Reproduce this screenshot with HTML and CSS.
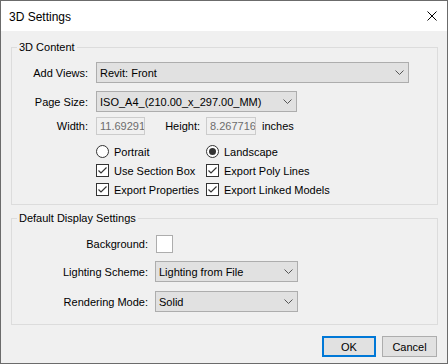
FILE: index.html
```html
<!DOCTYPE html>
<html lang="en">
<head>
    <meta charset="UTF-8">
    <title>3D Settings</title>
    <link rel="stylesheet" href="styles.css">
</head>
<body>
    <div class="window">
        <div class="titlebar">
            <span class="title">3D Settings</span>
            <svg class="close" width="10" height="10" viewBox="0 0 10 10">
                <path d="M0.5 0.5 L9.5 9.5 M9.5 0.5 L0.5 9.5" stroke="#000" stroke-width="1" fill="none"/>
            </svg>
        </div>
        <div class="dialog">
            <fieldset class="group content-group">
                <legend>3D Content</legend>
                <div class="row first">
                    <label class="lbl">Add Views:</label>
                    <div class="select views">
                        <span>Revit: Front</span>
                        <svg width="9" height="5" viewBox="0 0 9 5"><path d="M0.5 0.5 L4.5 4.5 L8.5 0.5" fill="none" stroke="#555"/></svg>
                    </div>
                </div>
                <div class="row gap8">
                    <label class="lbl">Page Size:</label>
                    <div class="select page">
                        <span>ISO_A4_(210.00_x_297.00_MM)</span>
                        <svg width="9" height="5" viewBox="0 0 9 5"><path d="M0.5 0.5 L4.5 4.5 L8.5 0.5" fill="none" stroke="#555"/></svg>
                    </div>
                </div>
                <div class="row gap5">
                    <label class="lbl">Width:</label>
                    <span class="field w1">11.69291</span>
                    <label class="lbl-height">Height:</label>
                    <span class="field w2">8.267716</span>
                    <span class="unit">inches</span>
                </div>
                <div class="options">
                    <div class="opt">
                        <svg width="13" height="13" viewBox="0 0 13 13"><circle cx="6.5" cy="6.5" r="6" fill="#fff" stroke="#333"/></svg>
                        <span>Portrait</span>
                    </div>
                    <div class="opt">
                        <svg width="13" height="13" viewBox="0 0 13 13"><circle cx="6.5" cy="6.5" r="6" fill="#fff" stroke="#333"/><circle cx="6.5" cy="6.5" r="3.5" fill="#333"/></svg>
                        <span>Landscape</span>
                    </div>
                    <div class="opt">
                        <svg width="13" height="13" viewBox="0 0 13 13"><rect x="0.5" y="0.5" width="12" height="12" fill="#fff" stroke="#333"/><path d="M2.5 6.5 L5 9 L10.5 3.5" fill="none" stroke="#333" stroke-width="1.2"/></svg>
                        <span>Use Section Box</span>
                    </div>
                    <div class="opt">
                        <svg width="13" height="13" viewBox="0 0 13 13"><rect x="0.5" y="0.5" width="12" height="12" fill="#fff" stroke="#333"/><path d="M2.5 6.5 L5 9 L10.5 3.5" fill="none" stroke="#333" stroke-width="1.2"/></svg>
                        <span>Export Poly Lines</span>
                    </div>
                    <div class="opt">
                        <svg width="13" height="13" viewBox="0 0 13 13"><rect x="0.5" y="0.5" width="12" height="12" fill="#fff" stroke="#333"/><path d="M2.5 6.5 L5 9 L10.5 3.5" fill="none" stroke="#333" stroke-width="1.2"/></svg>
                        <span>Export Properties</span>
                    </div>
                    <div class="opt">
                        <svg width="13" height="13" viewBox="0 0 13 13"><rect x="0.5" y="0.5" width="12" height="12" fill="#fff" stroke="#333"/><path d="M2.5 6.5 L5 9 L10.5 3.5" fill="none" stroke="#333" stroke-width="1.2"/></svg>
                        <span>Export Linked Models</span>
                    </div>
                </div>
            </fieldset>

            <fieldset class="group display-group">
                <legend>Default Display Settings</legend>
                <div class="row first-display">
                    <label class="lbl wide">Background:</label>
                    <span class="swatch"></span>
                </div>
                <div class="row gap8">
                    <label class="lbl wide">Lighting Scheme:</label>
                    <div class="select short">
                        <span>Lighting from File</span>
                        <svg width="9" height="5" viewBox="0 0 9 5"><path d="M0.5 0.5 L4.5 4.5 L8.5 0.5" fill="none" stroke="#555"/></svg>
                    </div>
                </div>
                <div class="row gap9">
                    <label class="lbl wide">Rendering Mode:</label>
                    <div class="select short">
                        <span>Solid</span>
                        <svg width="9" height="5" viewBox="0 0 9 5"><path d="M0.5 0.5 L4.5 4.5 L8.5 0.5" fill="none" stroke="#555"/></svg>
                    </div>
                </div>
            </fieldset>

            <div class="buttons">
                <button class="btn default">OK</button>
                <button class="btn">Cancel</button>
            </div>
        </div>
    </div>
</body>
</html>
```

FILE: styles.css
```css
body {
    margin: 0;
    padding: 0;
    background-color: #f0f0f0;
    font-family: "Liberation Sans", Arial, sans-serif;
    font-size: 11px;
    color: #000;
}
.window {
    width: 448px;
    height: 364px;
    box-sizing: border-box;
    border: 1px solid #6b6b6b;
    display: flex;
    flex-direction: column;
    background-color: #f0f0f0;
}
.titlebar {
    height: 30px;
    background-color: #fff;
    display: flex;
    align-items: center;
    justify-content: space-between;
    padding: 0 10px 0 8px;
}
.title {
    font-size: 12px;
    margin-top: 1px;
}
.close {
    display: block;
}
.dialog {
    flex: 1;
    display: flex;
    flex-direction: column;
}
.group {
    margin: 0 9px 0 10px;
    padding: 0;
    border: 1px solid #dcdcdc;
    min-width: 0;
}
.group legend {
    margin-left: 5px;
    padding: 0 2px;
    line-height: 13px;
}
.content-group {
    margin-top: 10px;
    padding-bottom: 5px;
}
.display-group {
    margin-top: 7px;
    padding-bottom: 12px;
}
.row {
    display: flex;
    align-items: center;
}
.row.first {
    margin-top: 8px;
}
.row.first-display {
    margin-top: 10px;
}
.row.gap8 {
    margin-top: 8px;
}
.row.gap9 {
    margin-top: 9px;
}
.row.gap5 {
    margin-top: 5px;
}
.lbl {
    width: 76px;
    margin-right: 8px;
    text-align: right;
    white-space: nowrap;
}
.lbl.wide {
    width: 136px;
    margin-right: 7px;
}
.select {
    height: 21px;
    box-sizing: border-box;
    background-color: #e1e1e1;
    border: 1px solid #adadad;
    display: flex;
    align-items: center;
    justify-content: space-between;
    padding: 0 4px 0 3px;
}
.select.views {
    width: 313px;
}
.select.page {
    width: 201px;
}
.select.short {
    width: 143px;
}
.select svg {
    display: block;
}
.field {
    height: 18px;
    box-sizing: border-box;
    border: 1px solid #cccccc;
    color: #6d6d6d;
    padding: 0 0 0 3px;
    line-height: 16px;
    overflow: hidden;
    white-space: nowrap;
}
.field.w1 {
    width: 49px;
}
.field.w2 {
    width: 50px;
}
.lbl-height {
    width: 55px;
    margin-right: 6px;
    text-align: right;
}
.unit {
    margin-left: 6px;
}
.options {
    margin: 7px 0 0 84px;
    display: grid;
    grid-template-columns: 110px auto;
    grid-auto-rows: 19px;
}
.opt {
    display: flex;
    align-items: center;
    gap: 5px;
    white-space: nowrap;
}
.opt svg {
    display: block;
}
.swatch {
    width: 17px;
    height: 18px;
    box-sizing: border-box;
    margin-left: 1px;
    background-color: #fff;
    border: 1px solid #adadad;
}
.buttons {
    display: flex;
    justify-content: flex-end;
    gap: 6px;
    margin: 11px 10px 0 0;
}
.btn {
    height: 21px;
    width: 55px;
    box-sizing: border-box;
    padding: 0;
    font-family: "Liberation Sans", Arial, sans-serif;
    font-size: 11px;
    color: #000;
    background-color: #e1e1e1;
    border: 1px solid #adadad;
    border-radius: 0;
}
.btn.default {
    width: 54px;
    border: 2px solid #0078d7;
}
```
